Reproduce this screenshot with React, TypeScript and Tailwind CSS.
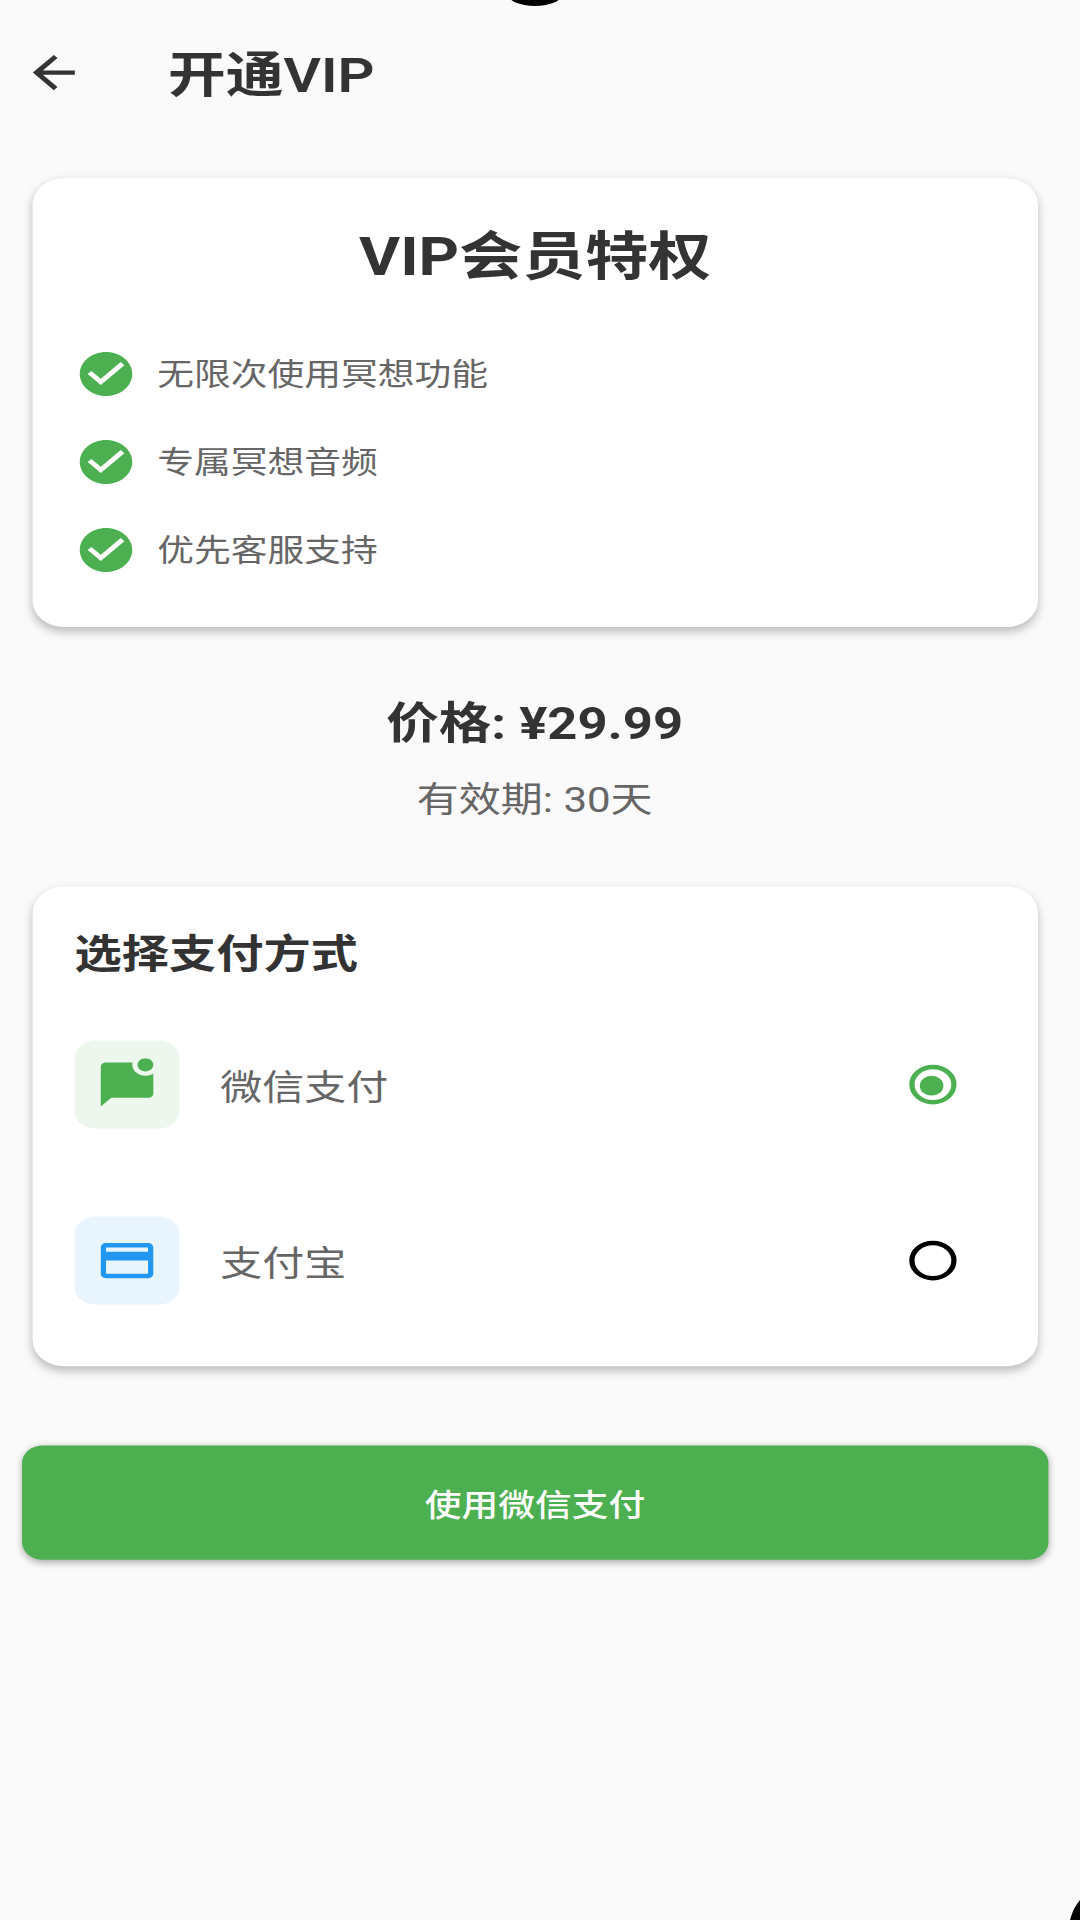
import React from "react";

const font = "font-['Roboto','Noto_Sans_CJK_SC',sans-serif]";

const features = ["无限次使用冥想功能", "专属冥想音频", "优先客服支持"];

const CheckIcon = () => (
  <svg viewBox="0 0 24 24" className="h-6 w-6 fill-[#4caf50]">
    <path d="M12 2C6.48 2 2 6.48 2 12s4.48 10 10 10 10-4.48 10-10S17.52 2 12 2zm-2 15l-5-5 1.41-1.41L10 14.17l7.59-7.59L19 8l-9 9z" />
  </svg>
);

const ChatIcon = () => (
  <svg viewBox="0 0 24 24" className="h-6 w-6 fill-[#4caf50]">
    <path d="M22 6.98V16c0 1.1-.9 2-2 2H6l-4 4V4c0-1.1.9-2 2-2h10.1c-.06.32-.1.66-.1 1 0 2.76 2.24 5 5 5 1.13 0 2.16-.39 3-1.02zM16 3c0 1.66 1.34 3 3 3s3-1.34 3-3-1.34-3-3-3-3 1.34-3 3z" />
  </svg>
);

const CardIcon = () => (
  <svg viewBox="0 0 24 24" className="h-6 w-6 fill-[#2196f3]">
    <path d="M20 4H4c-1.11 0-1.99.89-1.99 2L2 18c0 1.11.89 2 2 2h16c1.11 0 2-.89 2-2V6c0-1.11-.89-2-2-2zm0 14H4v-6h16v6zm0-10H4V6h16v2z" />
  </svg>
);

const Radio = ({ on }: { on?: boolean }) =>
  on ? (
    <div className="flex h-[18px] w-[18px] items-center justify-center rounded-full border-2 border-[#4caf50]">
      <div className="h-[9px] w-[9px] rounded-full bg-[#4caf50]" />
    </div>
  ) : (
    <div className="h-[18px] w-[18px] rounded-full border-2 border-black" />
  );

const PayRow = ({ box, icon, label, on }: { box: string; icon: React.ReactNode; label: string; on?: boolean }) => (
  <div className="flex h-20 items-center">
    <div className={`flex h-10 w-10 items-center justify-center rounded-lg ${box}`}>{icon}</div>
    <span className="ml-[15.5px] flex-1 pt-[3px] text-[16px] leading-6 text-[#666666]">{label}</span>
    <div className="mr-[15px] flex w-[18px] justify-center">
      <Radio on={on} />
    </div>
  </div>
);

export default function App() {
  return (
    <div className={`relative h-[1920px] w-[1080px] overflow-hidden bg-[#fafafa] ${font}`}>
      {/* the whole shot is squashed: 2.625 across, 2.2 down */}
      <div className="h-[872.7px] w-[411.43px] origin-top-left [transform:scale(2.625,2.2)]">
        <div className="h-[33px]" />
        <div className="flex h-[47.5px] items-start">
          <svg viewBox="0 0 24 24" className="ml-[8px] mt-[-12px] h-6 w-6 fill-[#333333] [transform:translateX(0.5px)]">
            <path d="M20 11H7.83l5.59-5.59L12 4l-8 8 8 8 1.41-1.41L7.83 13H20v-2z" />
          </svg>
          <h1 className="ml-[32px] mt-[-14px] text-[22px] leading-8 font-semibold text-[#333333]">开通VIP</h1>
        </div>

        <div className="ml-[12px] mr-[16.5px] h-[204.5px] rounded-xl bg-white p-4 shadow-[0_2px_4px_rgba(0,0,0,0.25)] [transform:translateX(0.4px)]">
          <h2 className="mt-[4px] text-center text-[24px] leading-8 font-bold text-[#333333]">VIP会员特权</h2>
          <ul className="mt-[25.5px] flex flex-col gap-4">
            {features.map((f) => (
              <li key={f} className="flex h-6 items-center gap-[7.5px]">
                <CheckIcon />
                <span className="text-[14px] text-[#666666]">{f}</span>
              </li>
            ))}
          </ul>
        </div>

        <div className="mr-1 mt-[29.5px] text-center">
          <p className="text-[20px] leading-7 font-bold text-[#333333]">价格: ¥29.99</p>
          <p className="mt-[9.8px] text-[16px] leading-6 text-[#666666]">有效期: 30天</p>
        </div>

        <div className="ml-[12px] mr-[16.5px] mt-[27.1px] h-[218px] rounded-xl bg-white px-4 pt-[19px] shadow-[0_2px_4px_rgba(0,0,0,0.25)] [transform:translateX(0.4px)]">
          <h3 className="text-[18px] leading-6 font-semibold text-[#333333]">选择支付方式</h3>
          <div className="mt-[6.8px]">
            <PayRow box="bg-[#edf7ee]" icon={<ChatIcon />} label="微信支付" on />
            <PayRow box="bg-[#e8f4fe]" icon={<CardIcon />} label="支付宝" />
          </div>
        </div>

        <button className="ml-[8px] mt-[35.6px] flex h-[52px] w-[390.9px] items-center justify-center rounded-lg bg-[#4caf50] pt-[4px] text-[14px] font-medium text-white shadow-[0_1px_3px_rgba(0,0,0,0.3)] [transform:translateX(0.4px)]">
          使用微信支付
        </button>
      </div>

      {/* display cutout and rounded corner showing in the capture */}
      <div className="absolute left-[507px] top-[-20px] h-[26px] w-[56px] rounded-[50%] bg-black" />
      <svg viewBox="0 0 10 20" className="absolute bottom-0 right-0 h-[20px] w-[10px] fill-black">
        <path d="M10 0V20H0Q3 8 10 0Z" />
      </svg>
    </div>
  );
}
